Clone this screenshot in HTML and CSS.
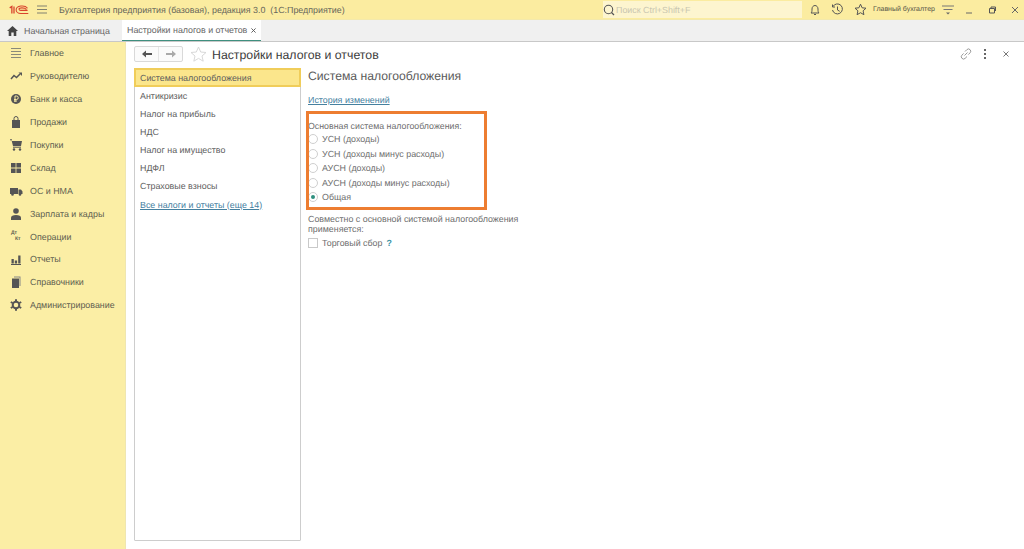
FILE: index.html
```html
<!DOCTYPE html>
<html lang="ru">
<head>
<meta charset="utf-8">
<title>Настройки налогов и отчетов</title>
<link rel="stylesheet" href="styles.css">
</head>
<body>
<header class="topbar">
  <svg class="logo" width="20" height="10" viewBox="0 0 28 14"><path d="M1 4l3-2v10M7 12V2" fill="none" stroke="#d9432c" stroke-width="1.8"/><path d="M26 4.5C24 2 20 1 16.5 1.5 12.500 2 10 4.500 10 7s2.500 5 6.500 5H27M26 7.500h-9.500c-1.500 0-2.500-.7-2.500-1.500s1.500-2 4-2 5 .5 6.500 2" fill="none" stroke="#d9432c" stroke-width="1.500"/></svg>
  <svg class="burger" width="10" height="9" viewBox="0 0 10 9"><path d="M0 1h10M0 4.500h10M0 8h10" stroke="#808070" stroke-width="1"/></svg>
  <span class="app-title">Бухгалтерия предприятия (базовая), редакция 3.0&nbsp; (1С:Предприятие)</span>
  <div class="search">
    <svg width="12" height="12" viewBox="0 0 12 12"><circle cx="5.500" cy="5.500" r="4.200" fill="none" stroke="#555" stroke-width="1.100"/><path d="M8.500 8.500l2.500 2.500" stroke="#555" stroke-width="1.300"/></svg>
    <span>Поиск Ctrl+Shift+F</span>
  </div>
  <div class="top-tools">
    <svg width="12" height="12" viewBox="0 0 12 12"><path d="M2 9c1-1 1-2 1-4s1.300-3.500 3-3.500S9 3 9 5s0 3 1 4zM5 10.500h2" fill="none" stroke="#555" stroke-width="1"/></svg>
    <svg width="13" height="13" viewBox="0 0 13 13"><path d="M2 3.500A5 5 0 1 1 1.500 7M1.500 1.500v2.500h2.500M6.500 3.500v3.500l2.200 1.300" fill="none" stroke="#555" stroke-width="1"/></svg>
    <svg width="13" height="13" viewBox="0 0 13 13"><path d="M6.500 1.200l1.600 3.600 3.900.4-2.900 2.600.8 3.900-3.400-2-3.400 2 .8-3.900L1 5.200l3.900-.4z" fill="none" stroke="#555" stroke-width="1"/></svg>
    <span class="user">Главный бухгалтер</span>
    <svg width="12" height="10" viewBox="0 0 12 10"><path d="M0 1h12M1.500 4.500h9" stroke="#777" stroke-width="1"/><path d="M4 7.500h4L6 9.500z" fill="#666"/></svg>
    <span class="win-controls">
      <svg width="8" height="8" viewBox="0 0 8 8"><path d="M1 7h6" stroke="#666" stroke-width="1"/></svg>
      <svg width="8" height="8" viewBox="0 0 8 8"><path d="M1.500 2.500h5v4.500h-5zM3 2.500V1h4.500v4" fill="none" stroke="#555" stroke-width="1"/></svg>
      <svg width="8" height="8" viewBox="0 0 8 8"><path d="M1 1l6 6M7 1L1 7" stroke="#666" stroke-width="1"/></svg>
    </span>
  </div>
</header>

<nav class="tabs">
  <div class="tab-home">
    <svg width="11" height="10" viewBox="0 0 11 10"><path d="M5.500 0L0 5h1.700v5h2.600V6.500h2.400V10h2.600V5H11z" fill="#444"/></svg>
    <span>Начальная страница</span>
  </div>
  <div class="tab-active">
    <span>Настройки налогов и отчетов</span>
    <svg width="5" height="5" viewBox="0 0 6 6"><path d="M.5.500l5 5M5.500.500l-5 5" stroke="#555" stroke-width="1.100"/></svg>
  </div>
</nav>

<div class="main">
  <aside class="sidebar">
    <div class="side-item"><svg class="si" width="14" height="12" viewBox="0 0 14 12"><path d="M2 1.500h10M2 4.500h10M2 7.500h10M2 10.500h10" stroke="#8a8a7a" stroke-width="1"/></svg><span>Главное</span></div>
    <div class="side-item"><svg class="si" width="14" height="12" viewBox="0 0 14 12"><path d="M2 9l3-3.500L7.500 7.500 11 4" fill="none" stroke="#555" stroke-width="1.500"/><path d="M9.500 2.500H13V6z" fill="#555"/></svg><span>Руководителю</span></div>
    <div class="side-item"><svg class="si" width="14" height="12" viewBox="0 0 14 12"><circle cx="7" cy="6" r="5" fill="#555"/><path d="M6 9V3h1.500a1.500 1.500 0 0 1 0 3.500H5M5 8h3" fill="none" stroke="#fbeea5" stroke-width="1"/></svg><span>Банк и касса</span></div>
    <div class="side-item"><svg class="si" width="14" height="12" viewBox="0 0 14 12"><path d="M3 4h8v8H3z" fill="#555"/><path d="M5 5V2.500a2 2 0 0 1 4 0V5" fill="none" stroke="#555" stroke-width="1"/></svg><span>Продажи</span></div>
    <div class="side-item"><svg class="si" width="14" height="12" viewBox="0 0 14 12"><path d="M3 2h10l-1 5H4L2.500 1" fill="#555"/><path d="M1 .800h2M4 8.200h8" stroke="#555"/><circle cx="5" cy="10.500" r="1.200" fill="#555"/><circle cx="11" cy="10.500" r="1.200" fill="#555"/></svg><span>Покупки</span></div>
    <div class="side-item"><svg class="si" width="14" height="12" viewBox="0 0 14 12"><path d="M2 1h4.600v4.600H2zM7.400 1H12v4.600H7.400zM2 6.400h4.600V11H2zM7.400 6.400H12V11H7.400z" fill="#555"/></svg><span>Склад</span></div>
    <div class="side-item"><svg class="si" width="14" height="12" viewBox="0 0 14 12"><path d="M1 3h8v6H1zM9.500 4.500h2.500L13.500 6.500V9H9.500z" fill="#555"/><circle cx="3.500" cy="9.500" r="1.300" fill="#555"/><circle cx="11" cy="9.500" r="1.300" fill="#555"/></svg><span>ОС и НМА</span></div>
    <div class="side-item"><svg class="si" width="14" height="12" viewBox="0 0 14 12"><circle cx="7" cy="3" r="2.800" fill="#555"/><path d="M2 12V9.500c0-1.500 2-2.500 5-2.500s5 1 5 2.500V12z" fill="#555"/></svg><span>Зарплата и кадры</span></div>
    <div class="side-item"><span class="si dtkt"><b>Дт</b><b>Кт</b></span><span>Операции</span></div>
    <div class="side-item"><svg class="si" width="14" height="12" viewBox="0 0 14 12"><path d="M2.500 6h2.300v4.500H2.500zM5.800 7.500h2.300v3H5.800zM9.200 2.500h2.300v8H9.200z" fill="#555"/><path d="M2 11.500h10" stroke="#555"/></svg><span>Отчеты</span></div>
    <div class="side-item"><svg class="si" width="14" height="12" viewBox="0 0 14 12"><path d="M3 2.500h7V12H3z" fill="#555"/><path d="M5 .500h6.500v9.500h-1V1.500H5z" fill="#888"/></svg><span>Справочники</span></div>
    <div class="side-item"><svg class="si" width="14" height="12" viewBox="0 0 14 12"><circle cx="7" cy="6" r="3.300" fill="none" stroke="#555" stroke-width="2"/><path d="M7 .200v2M7 9.800v2M1.800 3l1.800 1M10.400 8l1.800 1M1.800 9l1.800-1M10.400 4l1.800-1" stroke="#555" stroke-width="2"/></svg><span>Администрирование</span></div>
  </aside>

  <main class="content">
    <div class="title-row">
      <div class="nav-btns">
        <span class="nav-btn"><svg width="10" height="8" viewBox="0 0 10 8"><path d="M0 4l4-3.500V3h6v2H4v2.500z" fill="#555"/></svg></span>
        <span class="nav-btn"><svg width="10" height="8" viewBox="0 0 10 8"><path d="M10 4L6 .500V3H0v2h6v2.500z" fill="#aaa"/></svg></span>
      </div>
      <svg class="fav" width="17" height="16" viewBox="0 0 17 16"><path d="M8.500 1l2.200 5 5.300.5-4 3.500 1.200 5.200-4.700-2.800-4.700 2.800L5 10 1 6.500 6.300 6z" fill="none" stroke="#d8d8d8" stroke-width="1"/></svg>
      <h1>Настройки налогов и отчетов</h1>
      <div class="title-tools">
        <svg width="12" height="12" viewBox="0 0 12 12"><path d="M5 3.500l1.800-1.800a2.200 2.200 0 0 1 3.300 3.100L8.300 6.600M7 8.500l-1.800 1.800a2.200 2.200 0 0 1-3.300-3.100l1.800-1.800M4.500 7.500l3-3" fill="none" stroke="#999" stroke-width="1"/></svg>
        <svg width="4" height="10" viewBox="0 0 4 10"><path d="M1 0h2v2H1zM1 4h2v2H1zM1 8h2v2H1z" fill="#666"/></svg>
        <svg width="6" height="6" viewBox="0 0 6 6"><path d="M.5.500l5 5M5.500.500l-5 5" stroke="#777" stroke-width="1"/></svg>
      </div>
    </div>

    <div class="body-row">
      <div class="list">
        <div class="list-item selected">Система налогообложения</div>
        <div class="list-item">Антикризис</div>
        <div class="list-item">Налог на прибыль</div>
        <div class="list-item">НДС</div>
        <div class="list-item">Налог на имущество</div>
        <div class="list-item">НДФЛ</div>
        <div class="list-item">Страховые взносы</div>
        <div class="list-item link">Все налоги и отчеты (еще 14)</div>
      </div>

      <section class="panel">
        <h2>Система налогообложения</h2>
        <a class="history">История изменений</a>
        <div class="group-label">Основная система налогообложения:</div>
        <div class="radios">
          <div class="radio"><i></i>УСН (доходы)</div>
          <div class="radio"><i></i>УСН (доходы минус расходы)</div>
          <div class="radio"><i></i>АУСН (доходы)</div>
          <div class="radio"><i></i>АУСН (доходы минус расходы)</div>
          <div class="radio on"><i></i>Общая</div>
        </div>
        <p class="note">Совместно с основной системой налогообложения<br>применяется:</p>
        <div class="check"><i></i>Торговый сбор<b>?</b></div>
        <div class="highlight"></div>
      </section>
    </div>
  </main>
</div>
</body>
</html>
```

FILE: styles.css
```css
* { box-sizing: border-box; }
html, body { margin: 0; height: 100%; }
body {
  width: 1024px;
  height: 549px;
  overflow: hidden;
  display: flex;
  flex-direction: column;
  font-family: "Liberation Sans", Arial, sans-serif;
  font-size: 8.9px;
  color: #555;
  background: #fff;
  text-rendering: geometricPrecision;
}
.topbar {
  height: 20px;
  flex: none;
  display: flex;
  align-items: center;
  background: #fbeca0;
  border-bottom: 1px solid #f3e9ac;
  padding-left: 9px;
}
.logo { margin-right: 8px; }
.burger { margin-right: 12px; }
.app-title { width: 544px; flex: none; color: #66665a; font-size: 8.9px; white-space: nowrap; }
.search {
  width: 199px;
  flex: none;
  height: 17px;
  background: #fdf5cf;
  display: flex;
  align-items: center;
  gap: 1px;
  color: #c9c6b0;
  font-size: 8.9px;
}
.top-tools { display: flex; align-items: center; margin-left: 7px; gap: 10px; flex: 1; }
.user { font-size: 7px; color: #555548; width: 59px; margin-left: -4px; white-space: nowrap; }
.win-controls { display: flex; gap: 15px; margin-left: 1px; }
.tabs {
  height: 22px;
  flex: none;
  display: flex;
  background: #f0f0f0;
  border-bottom: 1px solid #c8c8c8;
}
.tab-home {
  width: 122px;
  display: flex;
  align-items: center;
  gap: 6px;
  padding-left: 7px;
  color: #666;
  font-size: 8.9px;
}
.tab-active {
  width: 139px;
  background: #fff;
  display: flex;
  align-items: center;
  gap: 4px;
  padding-left: 5px;
  border-bottom: 1px solid #3f8f7f;
  color: #666;
  font-size: 8.9px;
  white-space: nowrap;
}
.main { flex: 1; display: flex; min-height: 0; }
.sidebar {
  width: 126px;
  flex: none;
  background: #fbeea5;
  border-right: 1px solid #efe6b0;
}
.side-item {
  height: 22.9px;
  display: flex;
  align-items: center;
  padding-left: 9px;
  color: #5e5e50;
  font-size: 8.9px;
  white-space: nowrap;
}
.si { width: 14px; margin-right: 7px; flex: none; }
.dtkt { display: flex; flex-direction: column; font-size: 5px; line-height: 5.5px; padding-left: 2px; }
.dtkt b { font-weight: 700; }
.dtkt b + b { padding-left: 4px; }
.content { flex: 1; min-width: 0; display: flex; flex-direction: column; padding: 3px 8px 8px 8px; }
.title-row { height: 18px; flex: none; display: flex; align-items: center; }
.nav-btns {
  width: 49px;
  height: 16px;
  display: flex;
  border: 1px solid #d9d9d9;
  border-radius: 2px;
  background: #fbfbfb;
}
.nav-btn { flex: 1; display: flex; align-items: center; justify-content: center; }
.nav-btn + .nav-btn { border-left: 1px solid #e6e6e6; }
.fav { margin-left: 7px; margin-right: 5px; }
h1 { margin: 0; padding-top: 1px; font-size: 12.3px; font-weight: 400; color: #3c3c3c; flex: 1; white-space: nowrap; }
.title-tools { display: flex; align-items: center; gap: 11px; padding-right: 7px; }
.title-tools svg:last-child { margin-left: 5px; }
.body-row { flex: 1; min-height: 0; display: flex; margin-top: 5px; }
.list {
  width: 167px;
  flex: none;
  border: 1px solid #cdcdcd;
  border-radius: 1px;
}
.list-item { height: 18.1px; line-height: 18.1px; padding-left: 5px; color: #5e5e5e; white-space: nowrap; }
.list-item.selected {
  margin: -1px -1px 0;
  padding-left: 4px;
  height: 19px;
  background: #fbe68c;
  border: 2px solid #f0cd5a;
  line-height: 16.5px;
}
.list-item.link { color: #45809f; text-decoration: underline; text-underline-offset: 1px; }
.panel { position: relative; flex: 1; padding-left: 7px; }
h2 { margin: 0; font-size: 12.2px; font-weight: 400; color: #5a5a5a; line-height: 16px; }
.history {
  display: block;
  margin-top: 10px;
  color: #45809f;
  text-decoration: underline;
  line-height: 12px;
}
.group-label { margin-top: 14px; line-height: 12px; color: #6e6e6e; font-size: 8.8px; }
.radios { display: flex; flex-direction: column; }
.radio { height: 14.5px; display: flex; align-items: center; color: #6e6e6e; white-space: nowrap; }
.radio i {
  width: 10px;
  height: 10px;
  margin-right: 4px;
  border: 1px solid #cfcfcf;
  border-radius: 50%;
  background: #fff;
  flex: none;
  display: flex;
  align-items: center;
  justify-content: center;
}
.radio.on i::after { content: ""; width: 4px; height: 4px; border-radius: 50%; background: #2f8f7f; }
.note { margin: 9.25px 0 0; width: 230px; line-height: 10.5px; color: #6e6e6e; }
.check { margin-top: 2px; height: 13px; display: flex; align-items: center; color: #6e6e6e; }
.check i { width: 10px; height: 10px; margin-right: 4px; border: 1px solid #c9c9c9; background: #fff; flex: none; }
.check b { margin-left: 4px; color: #3a93a6; font-weight: 700; }
.highlight {
  position: absolute;
  left: 5px;
  top: 43px;
  width: 181px;
  height: 99px;
  border: 3px solid #ed7d31;
}
```
